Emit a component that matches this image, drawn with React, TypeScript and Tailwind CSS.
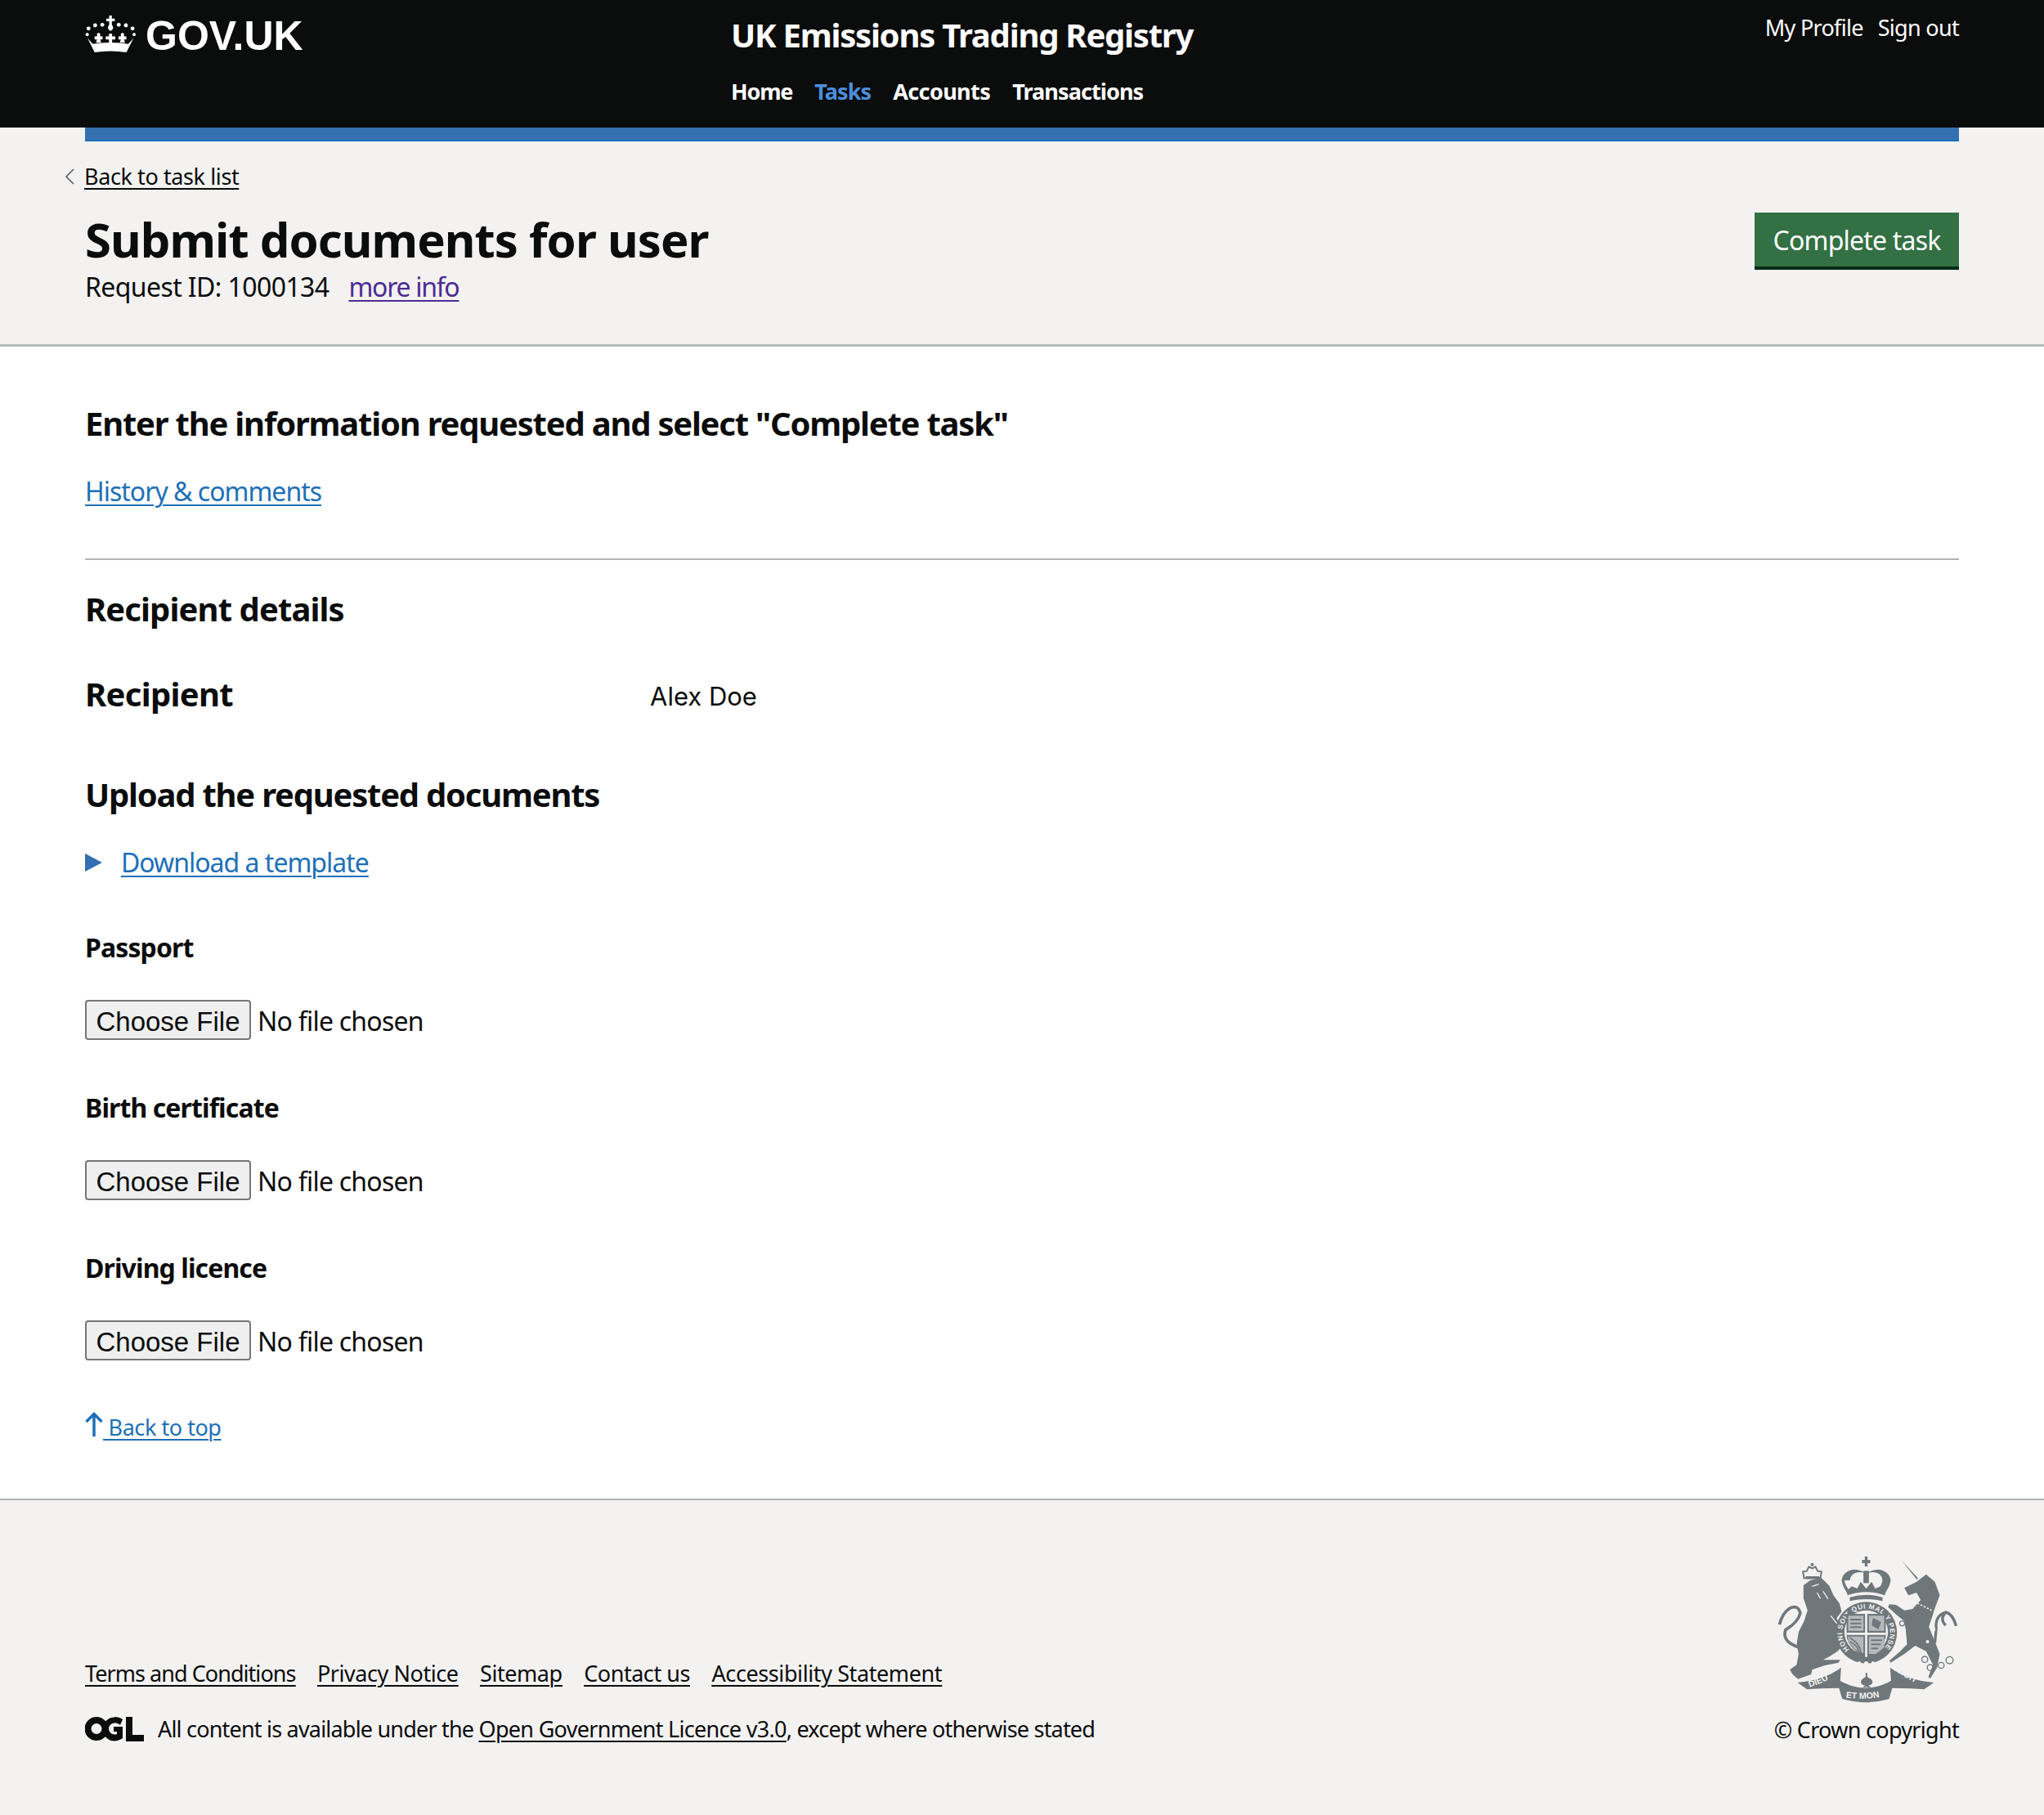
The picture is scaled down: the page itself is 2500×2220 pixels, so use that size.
const sans = "font-['Noto_Sans','Liberation_Sans',sans-serif]";

function Crown() {
  return (
    <svg viewBox="40 52 192 145" className="w-[63px] h-[47px] shrink-0" fill="#fff">
      <path d="M130 55h10v12h11v10h-11v12l5 10c0 8-5 12-10 14-5-2-10-6-10-14l5-10V77h-11V67h11z" />
      <circle cx="52" cy="104" r="7.500" />
      <circle cx="77" cy="92" r="7.500" />
      <circle cx="104" cy="90" r="7.500" />
      <circle cx="166" cy="90" r="7.500" />
      <circle cx="193" cy="92" r="7.500" />
      <circle cx="218" cy="104" r="7.500" />
      <circle cx="47" cy="127" r="6" />
      <circle cx="224" cy="127" r="6" />
      <path d="M129 124h12v10h12v11h-12v14h-12v-14h-12v-11h12z" />
      <path d="M84 124l6-4 6 4v10h9v11h-9l4 13H80l4-13h-9v-11h9z" />
      <path d="M174 124l6-4 6 4v10h9v11h-9l4 13h-20l4-13h-9v-11h9z" />
      <path d="M48 140l20 22q67-10 134 0l20-22-27 54q-60-10-120 0z" />
    </svg>
  );
}

function Ogl() {
  return (
    <svg viewBox="0 0 72 30" className="w-[72px] h-[30px] shrink-0" fill="#0b0c0c">
      <path fillRule="evenodd" d="M14 0a14.500 14.500 0 1 1 0 29 14.500 14.500 0 0 1 0-29zm0 8a6.500 6.500 0 1 0 0 13 6.500 6.500 0 0 0 0-13z" />
      <path fillRule="evenodd" d="M36 0c4 0 7 1 10 3l-3 7c-2-2-4-2.500-7-2.500a7 7 0 0 0 0 14c1 0 2 0 3-.5v-3h-4v-6h11v14c-3 2-7 3.500-10 3.500a14.500 14.500 0 0 1 0-29z" />
      <path d="M50 0h8v22h14v8H50z" />
    </svg>
  );
}

function Arms() {
  const g = "#6f777b";
  const bg = "#f3f2f1";
  return (
    <svg viewBox="95 70 665 540" className="w-[222px] h-[180px]" fill={g}>
      <defs>
        <path id="garter" d="M358 414 A88 88 0 1 1 482 414" />
        <path id="dieu" d="M212 552 Q270 535 322 498" />
        <path id="et" d="M345 590 Q420 602 495 582" />
        <path id="droit" d="M516 484 Q570 525 628 548" />
      </defs>
      {/* lion */}
      <path d="M190 178L215 160L255 150L285 180L300 215L322 245L330 275L312 298L332 350L340 385L318 418L285 440L262 452L325 452L318 462L268 472L222 488L218 505L170 522L150 505L140 488L165 470L172 430L165 395L172 350L192 310L205 270L190 225Z" />
      <path d="M172 405Q110 385 124 342Q172 312 178 280Q170 248 140 262Q112 280 102 322" fill="none" stroke={g} strokeWidth="11" />
      <path d="M290 290l50 62M222 182l24-8M240 205l12 22M262 200l18 28" stroke={bg} strokeWidth="4" fill="none" />
      <path d="M192 152l-4-24 14-2 8-16 12 6 12-6 8 16 14 2-4 24z" fill="none" stroke={g} strokeWidth="6" />
      <circle cx="222" cy="102" r="6" />
      <path d="M198 145h50v10h-50z" />
      {/* unicorn */}
      <path d="M550 87l60 65-4 5z" />
      <path d="M560 188L605 165L640 138L672 165L690 215L672 262L665 285L650 330L670 380L690 430L680 480L655 520L648 515L665 470L640 420L600 400L560 430L510 462L505 455L540 425L570 395L565 340L560 310L530 285L500 258L505 248L530 250L560 270L590 265L620 232L605 205L575 215Z" />
      <path d="M585 232l75 38" stroke={bg} strokeWidth="5" strokeDasharray="7 6" />
      <circle cx="562" cy="245" r="8" fill="none" stroke={bg} strokeWidth="3" />
      <circle cx="552" cy="318" r="9" fill="none" stroke={g} strokeWidth="4" />
      <path d="M672 390l5-55q-5-45 35-58 25 5 38 50M712 277q-24 25 0 48" fill="none" stroke={g} strokeWidth="10" />
      <circle cx="635" cy="450" r="11" fill="none" stroke={g} strokeWidth="4" />
      <circle cx="655" cy="480" r="11" fill="none" stroke={g} strokeWidth="4" />
      <circle cx="695" cy="472" r="11" fill="none" stroke={g} strokeWidth="4" />
      <circle cx="726" cy="453" r="13" fill="none" stroke={g} strokeWidth="4" />
      <circle cx="665" cy="340" r="9" fill={bg} />
      <circle cx="645" cy="385" r="6" fill={bg} />
      {/* royal crown */}
      <path d="M405 85h10V72h10v13h10v12h-10v12h-10V97h-10z" />
      <rect x="410" y="125" width="20" height="45" />
      <path d="M330 160q5-35 45-40 25 0 45 15 20-15 45-15 40 5 45 40-5 30-25 50l-15-10h-100l-15 10q-20-20-25-50zm10 0q5 25 22 40h96q17-15 22-40-3-28-35-30-22 0-25 10-3-10-25-10-32 2-35 30z" />
      <path d="M352 215q68-25 136 0l5-15-20-18-20 8-13-25-20 25-20-25-13 25-20-8-20 18z" />
      <path d="M360 222q60-18 120 0v14q-60-14-120 0z" />
      {/* garter */}
      <circle cx="420" cy="352" r="113" />
      <circle cx="420" cy="350" r="80" fill={bg} />
      <text fontFamily="'Liberation Sans',sans-serif" fontSize="25" fontWeight="bold" fill={bg}>
        <textPath href="#garter" textLength="405">HONI SOIT QUI MAL Y PENSE</textPath>
      </text>
      <path d="M348 283h144v76q0 50-72 82-72-32-72-82z" />
      <path d="M416 283h8v158h-8zM348 352h144v8H348z" fill={bg} />
      <path d="M354 290h56v55h-56zM430 290h56v55h-56zM430 366h56v40l-30 24-26 0zM354 366h56v62l-30-14-26-28z" fill="#b5b9bb" />
      <path d="M360 370q40 25 40 55M360 385q30 15 32 35" stroke={g} strokeWidth="5" fill="none" />
      <path d="M362 304h40M362 318h40M362 332h40M438 380h40M438 395h36M438 410h26" stroke={g} strokeWidth="6" />
      <path d="M445 298l30 15-10 27-25-15z" />
      {/* motto */}
      <path d="M168 535q100-10 160-55l-5 75q-80 0-120 5z" />
      <path d="M668 535q-100-10-160-55l5 75q80 0 120 5z" />
      <path d="M310 520q108 70 216 0l-22 75q-86 25-172 0z" />
      <circle cx="420" cy="465" r="8" fill={bg} />
      <circle cx="395" cy="463" r="6" fill={bg} />
      <circle cx="445" cy="463" r="6" fill={bg} />
      <path d="M418 500h6v14l14 8q12 12-2 22l-8 2 10 8h-16v-6h-2v6h-14l10-8-8-2q-14-10-2-22l12-8z" />
      <text fontFamily="'Liberation Sans',sans-serif" fontSize="32" fontWeight="bold" fill={bg}>
        <textPath href="#dieu">DIEU</textPath>
      </text>
      <text fontFamily="'Liberation Sans',sans-serif" fontSize="32" fontWeight="bold" fill={bg}>
        <textPath href="#et">ET MON</textPath>
      </text>
      <text fontFamily="'Liberation Sans',sans-serif" fontSize="32" fontWeight="bold" fill={bg}>
        <textPath href="#droit">DROIT</textPath>
      </text>
    </svg>
  );
}

function FileField({ label }: { label: string }) {
  return (
    <div className="flex flex-col">
      <label className="text-[32px] leading-[40px] font-bold text-[#0b0c0c] tracking-[-0.9px]">{label}</label>
      <input
        type="file"
        className="block w-[600px] h-[49px] mt-[44px] text-[32px] leading-[49px] text-[#0b0c0c] tracking-[-0.77px] file:font-['Liberation_Sans'] file:text-[33px] file:tracking-normal file:h-[49px] file:w-[203px] file:mr-[8px] file:bg-[#efefef] file:border-2 file:border-solid file:border-[#767676] file:rounded-[4px] file:px-0"
      />
    </div>
  );
}

export default function App() {
  return (
    <div className={`${sans} min-h-[2220px] flex flex-col bg-white text-[#0b0c0c]`}>
      <header className="bg-[#0b0c0c] h-[156px] px-[104px] flex text-white">
        <div className="w-[790px] flex items-start gap-[11px] pt-[18px] shrink-0">
          <Crown />
          <span className="font-['Liberation_Sans'] font-bold text-[50px] leading-[50px] mt-[1px]">GOV.UK</span>
        </div>
        <div className="flex flex-col">
          <div className="text-[40px] leading-[50px] font-bold mt-[18px] tracking-[-1.23px]">UK Emissions Trading Registry</div>
          <nav className="flex gap-[27px] mt-[26px] text-[27px] leading-[36px] font-bold tracking-[-0.9px]">
            <a className="tracking-[-1.2px]">Home</a>
            <a className="text-[#4c8fdc]">Tasks</a>
            <a className="tracking-[-0.6px]">Accounts</a>
            <a>Transactions</a>
          </nav>
        </div>
        <div className="ml-auto flex gap-[18px] pt-[16px] text-[27px] leading-[36px] tracking-[-0.7px]">
          <a>My Profile</a>
          <a>Sign out</a>
        </div>
      </header>

      <div className="bg-[#f3f2f1] h-[268px] border-b-[3px] border-[#b9bbbc] flex flex-col">
        <div className="mx-[104px] h-[17px] bg-[#3570b0] border-b-2 border-[#1d70b8]" />
        <div className="px-[104px] flex justify-between">
          <div>
            <div className="relative mt-[25px] h-[36px] text-[27px] leading-[36px] tracking-[-0.4px]">
              <svg viewBox="0 0 12 20" className="absolute -left-[25px] top-[8px] w-[12px] h-[20px]" fill="none" stroke="#505a5f" strokeWidth="1.500">
                <path d="M11 1L2 10l9 9" />
              </svg>
              <a className="-ml-[1px] underline underline-offset-[4px] decoration-2">Back to task list</a>
            </div>
            <h1 className="text-[58px] leading-[70px] font-bold mt-[24px] tracking-[-0.95px]">Submit documents for user</h1>
            <div className="text-[32px] leading-[44px] mt-[1px] tracking-[-0.6px]">
              Request ID: 1000134
              <a className="ml-[24px] text-[#4c2c92] underline underline-offset-[4px] decoration-2 tracking-[-1.3px]">more info</a>
            </div>
          </div>
          <button className="mt-[87px] w-[250px] h-[70px] pt-[2px] bg-[#337044] border-b-[4px] border-[#002d18] text-white text-[32px] tracking-[-0.8px] shrink-0">
            Complete task
          </button>
        </div>
      </div>

      <main className="px-[104px] flex-1 flex flex-col">
        <h2 className="text-[40px] leading-[50px] font-bold mt-[69px] tracking-[-1.22px]">Enter the information requested and select "Complete task"</h2>
        <a className="text-[32px] leading-[44px] mt-[36px] text-[#1d70b8] underline underline-offset-[4px] decoration-2 tracking-[-1px] self-start">History &amp; comments</a>
        <hr className="mt-[60px] border-t-2 border-[#b1b4b6]" />
        <h2 className="text-[40px] leading-[50px] font-bold mt-[35px] tracking-[-0.9px]">Recipient details</h2>
        <div className="flex items-center mt-[50px]">
          <div className="w-[691px] text-[40px] leading-[50px] font-bold tracking-[-0.7px]">Recipient</div>
          <div className="font-['Inter'] text-[31px] leading-[50px] mt-[7px]">Alex Doe</div>
        </div>
        <h2 className="text-[40px] leading-[50px] font-bold mt-[70px] tracking-[-1.23px]">Upload the requested documents</h2>
        <div className="flex items-center gap-[23px] mt-[36px] h-[44px]">
          <svg viewBox="0 0 21 22" className="w-[21px] h-[22px]" fill="#356fb0"><path d="M0 0l21 11L0 22z" /></svg>
          <a className="text-[32px] leading-[44px] text-[#1d70b8] underline underline-offset-[4px] decoration-2 tracking-[-1px]">Download a template</a>
        </div>
        <div className="flex flex-col gap-[63px] mt-[62px]">
          <FileField label="Passport" />
          <FileField label="Birth certificate" />
          <FileField label="Driving licence" />
        </div>
        <div className="flex items-end mt-[63px] text-[#1d70b8] text-[27px] leading-[29px] tracking-[-0.45px]">
          <a className="flex items-end">
            <svg viewBox="0 0 22 30" className="w-[22px] h-[30px] mb-[3px]" fill="none" stroke="#1d70b8" strokeWidth="3.500">
              <path d="M11 30V3M1.500 12L11 2.500 20.500 12" />
            </svg>
            <span className="underline underline-offset-[4px] decoration-2 whitespace-pre"> Back to top</span>
          </a>
        </div>
      </main>

      <footer className="bg-[#f3f2f1] border-t-2 border-[#b1b4b6] h-[387px] px-[104px] flex justify-between items-start">
        <div className="mt-[194px]">
          <div className="flex gap-[26.500px] text-[27px] leading-[36px] tracking-[-0.45px] underline underline-offset-[4px] decoration-2">
            <a className="tracking-[-0.95px]">Terms and Conditions</a>
            <a>Privacy Notice</a>
            <a>Sitemap</a>
            <a>Contact us</a>
            <a className="tracking-[-0.4px]">Accessibility Statement</a>
          </div>
          <div className="flex items-center gap-[17px] mt-[32px] text-[27px] leading-[36px] tracking-[-0.8px]">
            <Ogl />
            <span>
              All content is available under the <a className="underline underline-offset-[4px] decoration-2 tracking-[-0.7px]">Open Government Licence v3.0</a>, except where otherwise stated
            </span>
          </div>
        </div>
        <div className="flex flex-col items-end mt-[68px]">
          <Arms />
          <div className="text-[27px] leading-[36px] mt-[15px] tracking-[-0.7px]">© Crown copyright</div>
        </div>
      </footer>
    </div>
  );
}
